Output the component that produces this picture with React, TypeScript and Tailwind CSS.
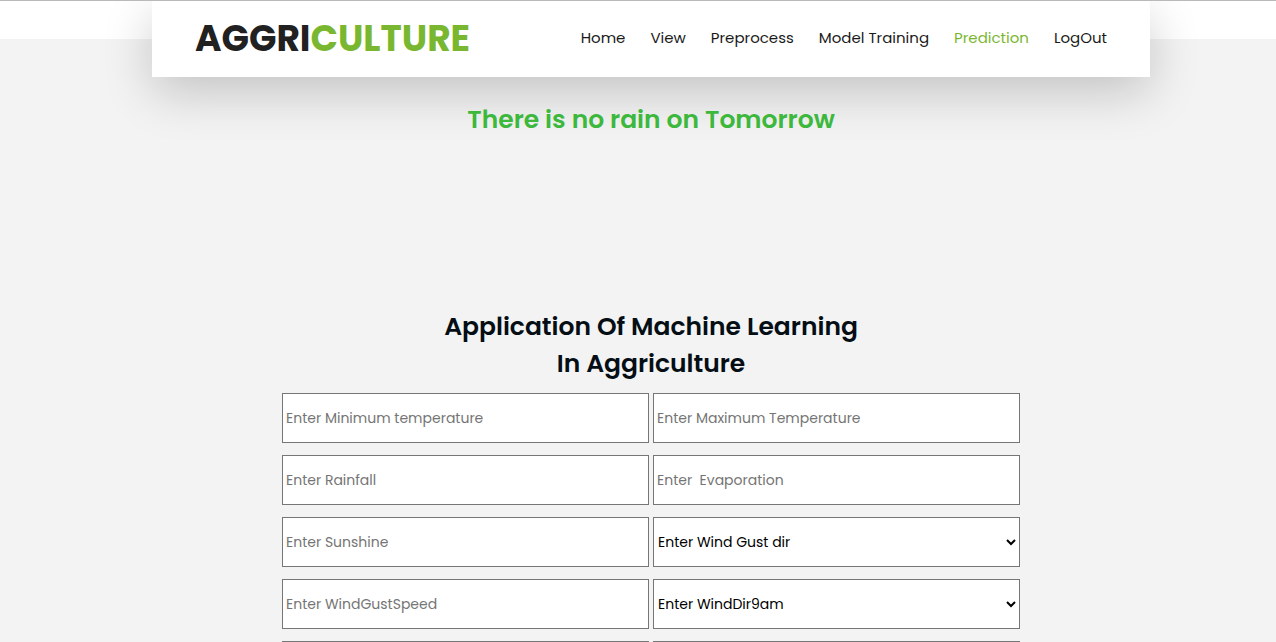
type Field = {
  kind: "text" | "select";
  name: string;
  label: string;
};

const links = ["Home", "View", "Preprocess", "Model Training", "Prediction", "LogOut"];

const fields: Field[] = [
  { kind: "text", name: "minTemp", label: "Enter Minimum temperature" },
  { kind: "text", name: "maxTemp", label: "Enter Maximum Temperature" },
  { kind: "text", name: "rainfall", label: "Enter Rainfall" },
  { kind: "text", name: "evaporation", label: "Enter  Evaporation" },
  { kind: "text", name: "sunshine", label: "Enter Sunshine" },
  { kind: "select", name: "windGustDir", label: "Enter Wind Gust dir" },
  { kind: "text", name: "windGustSpeed", label: "Enter WindGustSpeed" },
  { kind: "select", name: "windDir9am", label: "Enter WindDir9am" },
];

const inputClass =
  "h-[50px] w-full min-w-0 rounded-none border border-[#767676] bg-white px-[3px] text-[14px] text-black placeholder:text-[#757575]";

const selectClass =
  "h-[50px] w-full min-w-0 rounded-none border border-[#767676] bg-white px-0 text-[14px] text-black";

function FieldControl({ field }: { field: Field }) {
  if (field.kind === "select") {
    return (
      <select name={field.name} aria-label={field.label} className={selectClass}>
        <option>{field.label}</option>
      </select>
    );
  }
  return (
    <input
      type="text"
      name={field.name}
      aria-label={field.label}
      placeholder={field.label}
      className={inputClass}
    />
  );
}

function Header() {
  return (
    <header className="relative z-10 mx-auto flex h-[76px] w-full max-w-[998px] items-center justify-between bg-white px-[43px] shadow-[0_15px_50px_rgba(0,0,0,0.2)]">
      <a href="#" className="text-[36px] leading-[40px] font-bold text-[#212121]">
        AGGRI<span className="text-[#7ab730]">CULTURE</span>
      </a>
      <nav className="flex gap-[25px] pb-0.5 text-[15px] leading-6">
        {links.map((link) => (
          <a
            key={link}
            href="#"
            className={link === "Prediction" ? "text-[#7ab730]" : "text-[#1a1a1a]"}
          >
            {link}
          </a>
        ))}
      </nav>
    </header>
  );
}

export default function App() {
  return (
    <div className="h-screen overflow-hidden border-t border-[#b9b9b9] bg-white font-[Poppins,Inter,sans-serif]">
      <div className="pl-[26px]">
        <Header />
      </div>
      <main className="-mt-[38px] min-h-screen bg-[#f3f3f3] pt-[62px] pl-[26px]">
        <h2 className="relative z-20 text-center text-[25px] leading-[37px] font-semibold text-[#3cb83c]">
          There is no rain on Tomorrow
        </h2>
        <section className="mx-auto mt-[170px] w-full max-w-[738px]">
          <h1 className="text-center text-[25px] leading-[37px] font-semibold text-[#040e14]">
            Application Of Machine Learning
            <br />
            In Aggriculture
          </h1>
          <form className="mt-[11px] grid grid-cols-2 gap-x-1 gap-y-3">
            {fields.map((field) => (
              <FieldControl key={field.name} field={field} />
            ))}
            <input type="text" name="windDir3pm" aria-label="WindDir3pm" className={inputClass} />
            <input type="text" name="windSpeed9am" aria-label="WindSpeed9am" className={inputClass} />
          </form>
        </section>
      </main>
    </div>
  );
}
